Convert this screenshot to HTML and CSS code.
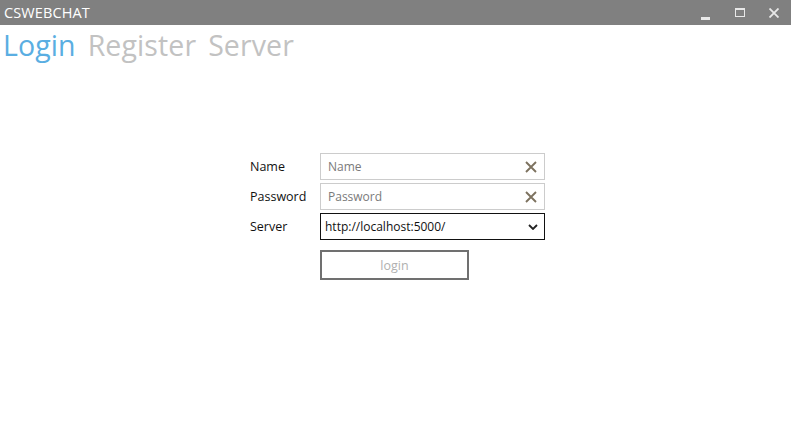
FILE: index.html
```html
<!DOCTYPE html>
<html>
<head>
<meta charset="utf-8">
<link rel="stylesheet" href="styles.css">
</head>
<body>
<div class="window">
  <header class="titlebar">
    <span class="title">CSWEBCHAT</span>
    <div class="controls">
      <span class="ctl"><svg width="10" height="10" viewBox="0 0 10 10"><rect x="0" y="7" width="9" height="3" fill="#e8e8e8"/></svg></span>
      <span class="ctl"><svg width="10" height="10" viewBox="0 0 10 10"><rect x="0.5" y="0.5" width="9" height="8" fill="none" stroke="#e8e8e8"/><rect x="0" y="0" width="10" height="2" fill="#e8e8e8"/></svg></span>
      <span class="ctl"><svg width="10" height="10" viewBox="0 0 10 10"><path d="M0.5 0.5 L9.5 9.5 M9.5 0.5 L0.5 9.5" stroke="#e8e8e8" stroke-width="1.8"/></svg></span>
    </div>
  </header>
  <nav class="tabs">
    <span class="tab active">Login</span>
    <span class="tab">Register</span>
    <span class="tab">Server</span>
  </nav>
  <main class="content">
    <form class="form">
      <label class="lbl">Name</label>
      <div class="field"><span class="ph">Name</span><svg class="clear" width="12" height="12" viewBox="0 0 12 12"><path d="M1 1 L11 11 M11 1 L1 11" stroke="#7d725f" stroke-width="1.9"/></svg></div>
      <label class="lbl">Password</label>
      <div class="field"><span class="ph">Password</span><svg class="clear" width="12" height="12" viewBox="0 0 12 12"><path d="M1 1 L11 11 M11 1 L1 11" stroke="#7d725f" stroke-width="1.9"/></svg></div>
      <label class="lbl">Server</label>
      <div class="field select"><span class="val">http://localhost:5000/</span><svg class="chev" width="10" height="6" viewBox="0 0 10 6"><path d="M1 1 L5 5 L9 1" fill="none" stroke="#222" stroke-width="1.8"/></svg></div>
      <span></span>
      <div class="btnrow"><button type="button" class="btn">login</button></div>
    </form>
  </main>
</div>
</body>
</html>
```
FILE: styles.css
```css
* { box-sizing: border-box; }
html, body { margin: 0; padding: 0; background: #fff; }
body { font-family: "Open Sans", "Noto Sans", sans-serif; width: 791px; height: 442px; overflow: hidden; }
.titlebar {
  height: 25px; background: #808080; display: flex; align-items: center;
  justify-content: space-between; padding-left: 4px;
}
.title { color: #fff; font-size: 14.5px; letter-spacing: 0.1px; }
.controls { display: flex; height: 25px; }
.ctl { width: 34px; display: flex; align-items: center; justify-content: center; }
.ctl svg { display: block; }
.controls .ctl:first-child { padding-top: 4px; }
.tabs { display: flex; gap: 12px; padding-left: 3px; height: 40px; align-items: center; }
.tab { font-size: 28.5px; color: #c2c2c2; letter-spacing: 0.1px; line-height: 40px; }
.tab.active { color: #5aaee2; }
.content { padding-top: 88px; padding-left: 250px; }
.form {
  display: grid; grid-template-columns: 70px 225px; row-gap: 3px; align-items: center;
}
.lbl { font-size: 12.5px; color: #111; }
.field {
  height: 27px; border: 1px solid #cccccc; display: flex; align-items: center;
  justify-content: space-between; padding: 0 7px 0 7px; font-size: 12px;
}
.ph { color: #7a7a7a; }
.clear { display: block; }
.select { border-color: #111; padding-left: 4px; padding-right: 6px; }
.val { color: #111; }
.chev { display: block; }
.btnrow { padding-top: 7px; }
.btn {
  width: 149px; height: 30px; border: 2px solid #707070; background: #fff;
  color: #b0b0b0; font-family: inherit; font-size: 12.5px; padding: 0;
}
```
